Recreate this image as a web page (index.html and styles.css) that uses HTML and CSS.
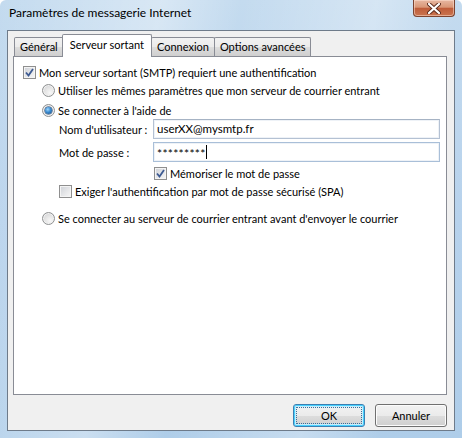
FILE: index.html
```html
<!DOCTYPE html>
<html lang="fr">
<head>
<meta charset="utf-8">
<title>Paramètres de messagerie Internet</title>
<link rel="stylesheet" href="styles.css">
</head>
<body>
<div class="window">
  <div class="titlebar">
    <span class="title">Paramètres de messagerie Internet</span>
    <div class="close">
      <svg width="14" height="11" viewBox="0 0 14 11"><path d="M2 1 L12 10 M12 1 L2 10" stroke="#5a2a1c" stroke-width="4" stroke-linecap="round"/><path d="M2 1 L12 10 M12 1 L2 10" stroke="#fff" stroke-width="2.2" stroke-linecap="round"/></svg>
    </div>
  </div>
  <div class="client">
    <div class="tabs">
      <div class="tab first">Général</div>
      <div class="tab active">Serveur sortant</div>
      <div class="tab">Connexion</div>
      <div class="tab">Options avancées</div>
    </div>
    <div class="panel">
      <div class="row r1">
        <span class="cb checked"><svg width="9" height="9" viewBox="0 0 9 9"><path d="M1 4.5 L3.5 7.5 L8 1" fill="none" stroke="#3d5a92" stroke-width="1.8"/></svg></span>
        <span class="lbl">Mon serveur sortant (SMTP) requiert une authentification</span>
      </div>
      <div class="row r2 ind1">
        <span class="rb"></span>
        <span class="lbl">Utiliser les mêmes paramètres que mon serveur de courrier entrant</span>
      </div>
      <div class="row r3 ind1">
        <span class="rb on"></span>
        <span class="lbl">Se connecter à l'aide de</span>
      </div>
      <div class="row r4 ind2">
        <span class="flabel">Nom d'utilisateur :</span>
        <span class="input">userXX@mysmtp.fr</span>
      </div>
      <div class="row r5 ind2">
        <span class="flabel">Mot de passe :</span>
        <span class="input focus"><span class="pw">*********</span><span class="caret"></span></span>
      </div>
      <div class="row r6 ind3">
        <span class="cb checked"><svg width="9" height="9" viewBox="0 0 9 9"><path d="M1 4.5 L3.5 7.5 L8 1" fill="none" stroke="#3d5a92" stroke-width="1.8"/></svg></span>
        <span class="lbl">Mémoriser le mot de passe</span>
      </div>
      <div class="row r7 ind2">
        <span class="cb"></span>
        <span class="lbl">Exiger l'authentification par mot de passe sécurisé (SPA)</span>
      </div>
      <div class="row r8 ind1">
        <span class="rb"></span>
        <span class="lbl">Se connecter au serveur de courrier entrant avant d'envoyer le courrier</span>
      </div>
    </div>
    <div class="buttons">
      <button class="btn default"><span class="focusring">OK</span></button>
      <button class="btn">Annuler</button>
    </div>
  </div>
</div>
</body>
</html>
```

FILE: styles.css
```css
* { box-sizing: border-box; }
html, body { margin: 0; padding: 0; }
body {
  width: 462px;
  height: 438px;
  overflow: hidden;
  font-family: "Lato", "Liberation Sans", sans-serif;
  font-size: 11px;
  color: #000;
}
.window {
  width: 462px;
  height: 438px;
  display: flex;
  flex-direction: column;
  background:
    linear-gradient(100deg, rgba(255,255,255,0) 0%, rgba(255,255,255,0.35) 30%, rgba(255,255,255,0) 45%, rgba(255,255,255,0.3) 70%, rgba(255,255,255,0) 85%),
    linear-gradient(180deg, #c4dbef 0%, #b7d2ec 50%, #aecde9 100%);
  border-radius: 6px 6px 0 0;
}
.titlebar {
  height: 30px;
  flex: none;
  display: flex;
  justify-content: space-between;
  align-items: flex-start;
  padding: 0 7px 0 9px;
}
.title {
  font-size: 12px;
  line-height: 26px;
  color: #000;
}
.close {
  width: 42px;
  height: 17px;
  border: 1px solid #7b4330;
  border-top: none;
  border-radius: 0 0 4px 4px;
  background: linear-gradient(180deg, #e7b8a2 0%, #d99777 45%, #bf5d3a 52%, #c9744f 100%);
  display: flex;
  align-items: center;
  justify-content: center;
  box-shadow: inset 0 0 0 1px rgba(255,230,215,0.5);
}
.close svg { display: block; }
.client {
  flex: 1;
  margin: 0 7px 7px 7px;
  background: #f0f0f0;
  border: 1px solid #6e7b8a;
  padding: 3px 7px 0 5px;
  display: flex;
  flex-direction: column;
}
.tabs {
  display: flex;
  align-items: flex-end;
  height: 22px;
  padding-left: 1px;
  position: relative;
  z-index: 1;
}
.tab {
  height: 19px;
  border: 1px solid #898c95;
  border-bottom: none;
  margin-right: -1px;
  padding: 0 5px 0 5px;
  line-height: 17px;
  background: linear-gradient(180deg, #f2f2f2 0%, #ebebeb 50%, #dddddd 51%, #cfcfcf 100%);
  border-radius: 2px 2px 0 0;
}
.tab.active {
  background: #fff;
  margin-left: -1px;
  margin-right: -2px;
  padding: 0 7px 0 7px;
  line-height: 19px;
  position: relative;
  z-index: 2;
  height: 23px;
  margin-bottom: -1px;
}
.tab.active + .tab { margin-left: 1px; }
.panel {
  height: 339px;
  background: #fff;
  border: 1px solid #898c95;
  padding: 6px 0 0 9px;
  display: flex;
  flex-direction: column;
}
.row {
  display: flex;
  align-items: center;
  height: 18px;
}
.ind1 { padding-left: 19px; }
.ind2 { padding-left: 36px; }
.ind3 { padding-left: 131px; }
.r3 { margin-top: 2px; }
.r4 { height: 20px; }
.r5 { height: 20px; margin-top: 3px; }
.r6 { margin-top: 2px; }
.r8 { margin-top: 9px; }
.lbl { margin-left: 3px; white-space: nowrap; }
.flabel { width: 94px; white-space: nowrap; }
.cb {
  width: 13px;
  height: 13px;
  flex: none;
  border: 1px solid #8f8f8f;
  background: linear-gradient(135deg, #cdd0d6 0%, #e6e7e9 55%, #f7f7f7 100%);
  box-shadow: inset 0 0 0 1px #f4f4f4;
  display: flex;
  align-items: center;
  justify-content: center;
}
.cb svg { display: block; }
.rb {
  width: 13px;
  height: 13px;
  flex: none;
  border-radius: 50%;
  border: 1px solid #8f9192;
  background: radial-gradient(circle at 65% 70%, #f8f8f8 0%, #e3e3e3 50%, #c9cbcf 100%);
  box-shadow: inset 0 0 0 1px #f2f2f2;
  position: relative;
}
.rb.on::after {
  content: "";
  position: absolute;
  left: 2px;
  top: 2px;
  width: 7px;
  height: 7px;
  border-radius: 50%;
  background: radial-gradient(circle at 40% 35%, #9fd8ff 0%, #3a8bd0 45%, #16467b 100%);
  box-shadow: 0 0 0 0.5px #1b3f6b;
}
.input {
  width: 287px;
  height: 20px;
  border: 1px solid #b4c1d3;
  border-top-color: #a6b3c4;
  background: #fff;
  padding: 0 0 0 3px;
  line-height: 18px;
  display: flex;
  align-items: center;
  white-space: nowrap;
  font-size: 11.5px;
  box-shadow: inset 0 0 0 1px #eef2f7;
}
.input.focus { border-color: #a9bfd8; }
.pw {
  font-size: 12px;
  letter-spacing: 0.3px;
  padding-top: 3px;
}
.caret {
  display: inline-block;
  width: 1px;
  height: 14px;
  background: #000;
  margin-left: 0;
}
.buttons {
  display: flex;
  justify-content: flex-end;
  gap: 10px;
  margin-top: 9px;
  padding-right: 0;
}
.btn {
  width: 72px;
  height: 23px;
  font: inherit;
  color: #000;
  border: 1px solid #707070;
  border-radius: 3px;
  background: linear-gradient(180deg, #f2f2f2 0%, #ebebeb 50%, #dddddd 51%, #cfcfcf 100%);
  box-shadow: inset 0 0 0 1px #fcfcfc;
  padding: 0;
  display: flex;
  align-items: center;
  justify-content: center;
}
.btn.default {
  border-color: #3c7fb1;
  box-shadow: inset 0 0 0 1px #48d1ff, inset 0 0 0 2px #c8ecfb;
  padding: 2px;
}
.focusring {
  display: flex;
  align-items: center;
  justify-content: center;
  width: 100%;
  height: 100%;
  border: 1px dotted #3a6f9a;
  border-radius: 1px;
}
```
